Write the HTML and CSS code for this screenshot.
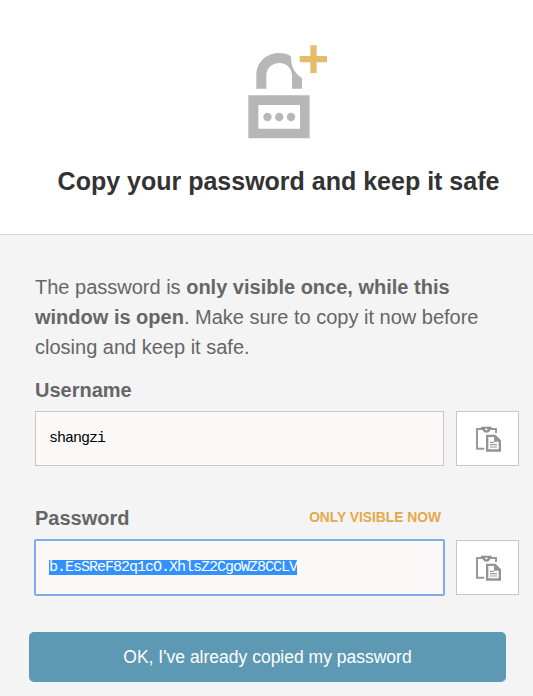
FILE: index.html
```html
<!DOCTYPE html>
<html lang="en">
<head>
<meta charset="utf-8">
<title>Copy your password</title>
<link rel="stylesheet" href="styles.css">
</head>
<body>
<svg class="defs" width="0" height="0" aria-hidden="true">
  <symbol id="clipboard" viewBox="0 0 75 76">
    <path d="M20 8H3V67H25M44 8H60V20" fill="none" stroke="#999" stroke-width="6"/>
    <path d="M15 1H47V7Q42 9 42 13Q38 19 31 19Q24 19 21 13Q20 9 15 8Z" fill="#8f8f8f"/>
    <circle cx="31" cy="9" r="3.5" fill="#eee"/>
    <path d="M33.500 28.500H57L71.500 43V72.500H33.500Z" fill="#fff" stroke="#949494" stroke-width="7"/>
    <path d="M54 27V46H73Z" fill="#949494"/>
    <path d="M42 48H54M42 55H63M42 62H63" stroke="#999" stroke-width="3.5"/>
  </symbol>
</svg>
<header class="header">
  <svg class="lock" viewBox="0 0 345 345" aria-hidden="true">
    <path d="M79 161V122C79 80 110 54 147 54Q168 54 183 64C182 96 195 116 216 129V161H186V122C186 99 169 84 148 84S109 99 109 122V161Z" fill="#b7b7b7"/>
    <path fill-rule="evenodd" d="M55 181H239V310H55ZM85 210V281H210V210Z" fill="#b7b7b7"/>
    <g fill="#b7b7b7"><circle cx="112.500" cy="246" r="12.500"/><circle cx="147.500" cy="246" r="12.500"/><circle cx="183" cy="246" r="12.500"/></g>
    <path d="M241 31H260V63H291V82H260V114H241V82H209V63H241Z" fill="#e3bd69"/>
  </svg>
  <h1 class="title">Copy your password and keep it safe</h1>
</header>
<main class="content">
  <p class="notice">The password is <strong>only visible once, while this window is open</strong>. Make sure to copy it now before closing and keep it safe.</p>
  <section class="field">
    <div class="field-head"><span class="label">Username</span></div>
    <div class="row">
      <div class="input"><span class="value">shangzi</span></div>
      <button class="copy" aria-label="Copy username"><svg><use href="#clipboard"/></svg></button>
    </div>
  </section>
  <section class="field">
    <div class="field-head"><span class="label">Password</span><span class="hint">ONLY VISIBLE NOW</span></div>
    <div class="row">
      <div class="input focused"><span class="value selected">b.EsSReF82q1cO.XhlsZ2CgoWZ8CCLV</span></div>
      <button class="copy" aria-label="Copy password"><svg><use href="#clipboard"/></svg></button>
    </div>
  </section>
  <button class="confirm">OK, I've already copied my password</button>
</main>
</body>
</html>
```
FILE: styles.css
```css
* { box-sizing: border-box; }
body {
  margin: 0;
  height: 696px;
  overflow: hidden;
  background: #f4f4f4;
  color: #666;
  font-family: "Liberation Sans", Arial, sans-serif;
}
.defs { display: none; }
.header {
  height: 235px;
  padding: 35px 0 0 24px;
  background: #fff;
  border-bottom: 1px solid #d9d9d9;
  text-align: center;
}
.lock { display: block; width: 115px; height: 115px; margin-left: 206px; }
.title {
  margin: 16px 0 0;
  color: #333;
  font-size: 25px;
  line-height: 30px;
  white-space: nowrap;
}
.content { padding: 37px 14px 0 35px; }
.notice { margin: 0; width: 460px; font-size: 20px; line-height: 30px; }
.field-head {
  display: flex;
  justify-content: space-between;
  align-items: center;
  width: 406px;
  height: 49px;
  padding-top: 7px;
  font-weight: bold;
}
.field + .field .field-head { height: 74px; padding-top: 30px; }
.label { font-size: 20px; line-height: 30px; }
.hint { padding-bottom: 2px; color: #e3a94a; font-size: 13.8px; }
.row { display: flex; gap: 12px; height: 55px; }
.input {
  display: flex;
  align-items: center;
  width: 409px;
  padding-left: 13px;
  background: #faf9f8;
  border: 1px solid #c8c8c8;
  color: #000;
}
.value {
  height: 15px;
  font: 15px/15px "Liberation Mono", monospace;
  letter-spacing: -1px;
}
.focused { border-color: #8ba9dc; box-shadow: 0 0 0 1px #7baaf7; border-radius: 1px; }
.selected { background: #3390ff; color: #fff; }
.copy {
  display: flex;
  align-items: center;
  justify-content: center;
  width: 63px;
  padding: 0 0 0 1px;
  background: #fff;
  border: 1px solid #c8c8c8;
}
.copy svg { width: 25px; height: 26px; }
.confirm {
  display: block;
  width: 477px;
  height: 50px;
  margin: 37px 0 0 -6px;
  background: #5e99b4;
  border: 0;
  border-radius: 5px;
  color: #fff;
  font: 17.5px "Liberation Sans", Arial, sans-serif;
}
```
